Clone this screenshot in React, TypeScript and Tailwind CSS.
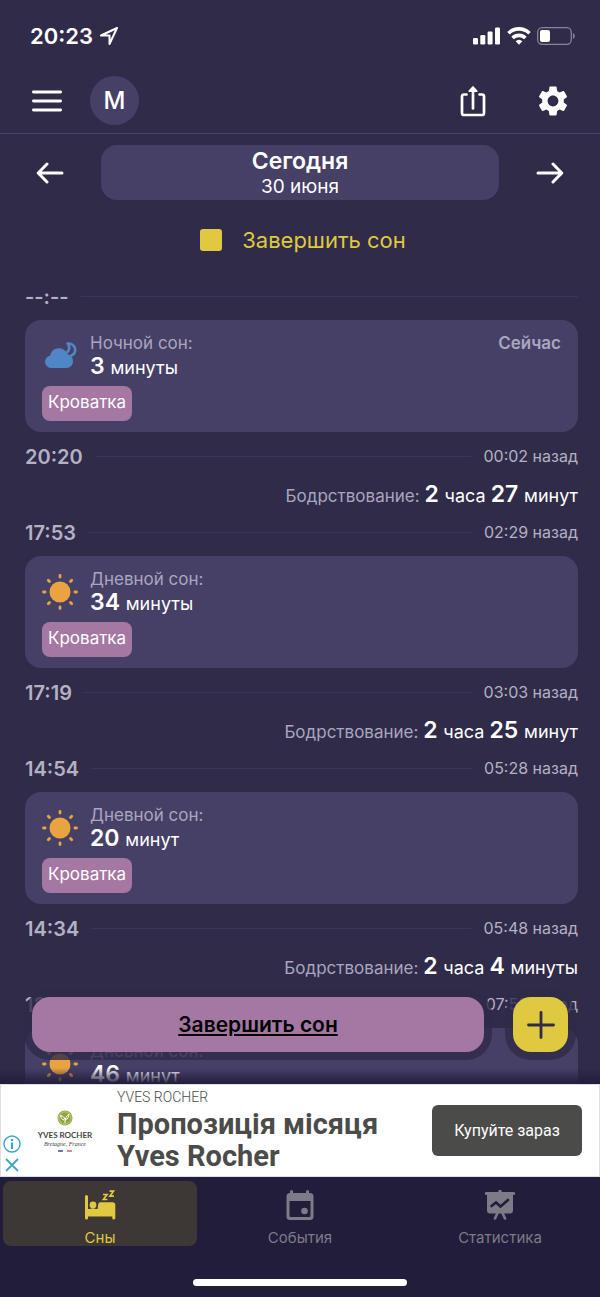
import type { ReactNode } from 'react'
import { MdSettings } from 'react-icons/md'

interface SleepEntry {
	id: string
	kind: 'night' | 'day'
	amount: string
	unit: string
	start: string
	startAgo: string
	end: string
	endAgo?: string
	now?: boolean
	awake?: [string, string, string, string]
}

const entries: SleepEntry[] = [
	{
		id: 'night',
		kind: 'night',
		amount: '3',
		unit: 'минуты',
		end: '--:--',
		start: '20:20',
		startAgo: '00:02 назад',
		now: true,
		awake: ['2', 'часа', '27', 'минут'],
	},
	{
		id: 'day-3',
		kind: 'day',
		amount: '34',
		unit: 'минуты',
		end: '17:53',
		endAgo: '02:29 назад',
		start: '17:19',
		startAgo: '03:03 назад',
		awake: ['2', 'часа', '25', 'минут'],
	},
	{
		id: 'day-2',
		kind: 'day',
		amount: '20',
		unit: 'минут',
		end: '14:54',
		endAgo: '05:28 назад',
		start: '14:34',
		startAgo: '05:48 назад',
		awake: ['2', 'часа', '4', 'минуты'],
	},
	{
		id: 'day-1',
		kind: 'day',
		amount: '46',
		unit: 'минут',
		end: '12:30',
		endAgo: '07:52 назад',
		start: '11:44',
		startAgo: '08:38 назад',
	},
]

function StatusBar() {
	return (
		<div className="flex h-18 items-center justify-between pr-[25px] pl-[30px] text-white">
			<div className="flex items-center gap-1.5">
				<span className="text-[22px] font-semibold">20:23</span>
				<svg className="h-5 w-5" viewBox="0 0 20 20" fill="none" stroke="currentColor" strokeWidth="2" strokeLinejoin="round">
					<path d="M18 2 2 9.5h8.5V18Z" />
				</svg>
			</div>
			<div className="flex items-center gap-1.5">
				<svg className="h-[18px] w-7" viewBox="0 0 28 18" fill="currentColor">
					<rect x="0" y="11" width="5" height="6.5" rx="1.2" />
					<rect x="7.3" y="8" width="5" height="9.5" rx="1.2" />
					<rect x="14.6" y="4.5" width="5" height="13" rx="1.2" />
					<rect x="22" y="0.5" width="5" height="17" rx="1.2" />
				</svg>
				<svg className="h-[18px] w-6" viewBox="0 0 24 18" fill="none" stroke="currentColor" strokeWidth="3.6">
					<path d="M1.500 6.200a15 15 0 0 1 21 0" />
					<path d="M5.600 11a9 9 0 0 1 12.800 0" />
					<path d="M12 17.800 8.600 14.300a4.600 4.600 0 0 1 6.800 0Z" fill="currentColor" stroke="none" />
				</svg>
				<svg className="h-[18px] w-[38px]" viewBox="0 0 38 18">
					<rect x="0.7" y="0.7" width="33.6" height="16.6" rx="4.5" fill="none" stroke="#8783a0" strokeWidth="1.3" />
					<rect x="3" y="3" width="10" height="12" rx="2" fill="#fff" />
					<path d="M36 6a3.4 3.4 0 0 1 0 6Z" fill="#8783a0" />
				</svg>
			</div>
		</div>
	)
}

function Header() {
	return (
		<header className="flex h-[62px] items-center border-b border-[#4a4567] px-8 pb-1 text-white">
			<button aria-label="Меню">
				<svg className="h-6 w-[30px]" viewBox="0 0 30 24" stroke="currentColor" strokeWidth="2.8" strokeLinecap="round">
					<path d="M1.4 3h27.2M1.4 12h27.2M1.4 21h27.2" />
				</svg>
			</button>
			<button className="ml-7 flex size-[49px] items-center justify-center rounded-full bg-[#464067] text-2xl font-medium">
				M
			</button>
			<button aria-label="Поделиться" className="mr-[49px] ml-auto">
				<svg className="h-8 w-[26px]" viewBox="0 0 26 32" fill="none" stroke="currentColor" strokeWidth="2.7" strokeLinecap="round" strokeLinejoin="round">
					<path d="M6.500 9.500H4a2 2 0 0 0-2 2v16.500a2 2 0 0 0 2 2h18a2 2 0 0 0 2-2V11.500a2 2 0 0 0-2-2h-2.500" />
					<path d="M13 23.500V5" />
					<path d="M9.300 6 13 2 16.700 6Z" fill="currentColor" strokeWidth="1.800" />
				</svg>
			</button>
			<button aria-label="Настройки">
				<MdSettings className="-mr-[3px] size-9" />
			</button>
		</header>
	)
}

function ArrowIcon({ flipped = false }: { flipped?: boolean }) {
	return (
		<svg
			className={flipped ? 'h-[22px] w-7 rotate-180' : 'h-[22px] w-7'}
			viewBox="0 0 28 22"
			fill="none"
			stroke="currentColor"
			strokeWidth="3"
			strokeLinecap="round"
			strokeLinejoin="round"
		>
			<path d="M26 11H2.500M11 2 2.200 11l8.800 9" />
		</svg>
	)
}

function DayPicker() {
	return (
		<div className="flex items-center gap-[37px] px-9 pt-[11px] text-white">
			<button aria-label="Предыдущий день">
				<ArrowIcon />
			</button>
			<button className="flex h-[55px] flex-1 flex-col items-center justify-center rounded-2xl bg-[#464067]">
				<span className="text-[23px] leading-7 font-semibold">Сегодня</span>
				<span className="text-[19px] leading-6">30 июня</span>
			</button>
			<button aria-label="Следующий день">
				<ArrowIcon flipped />
			</button>
		</div>
	)
}

function SunIcon() {
	return (
		<svg className="size-9" viewBox="0 0 36 36" fill="#e9a341" stroke="#e9a341" strokeWidth="2.8" strokeLinecap="round">
			<circle cx="18" cy="18" r="10.5" stroke="none" />
			<path d="M18 1.500v1.600M18 32.900v1.600M1.500 18h1.600M32.900 18h1.600M6.300 6.300l1.200 1.200M28.500 28.500l1.200 1.200M6.300 29.700l1.200-1.200M28.500 7.500l1.200-1.200" />
		</svg>
	)
}

function NightIcon() {
	return (
		<svg className="size-9" viewBox="0 0 36 36">
			<path
				d="M25.500 5.500c4.500-.4 8 2.700 7.700 6.700-.2 2.700-1.700 4.700-4.400 5.700M25.500 5.500c2.300 2.800 2.300 6.200-.6 9"
				fill="none"
				stroke="#4f86c6"
				strokeWidth="2.6"
				strokeLinecap="round"
				strokeLinejoin="round"
			/>
			<path d="M9 30a6.200 6.200 0 0 1-.9-12.300C8.800 13.200 12.400 10.200 16.800 10.200c4 0 7.200 2.300 8.500 6 3.300.6 5.700 3.200 5.700 6.900 0 4-2.700 6.900-6.500 6.900Z" fill="#4f86c6" />
		</svg>
	)
}

function TimeRow({ time, ago }: { time: string; ago?: string }) {
	return (
		<div className="flex h-12 items-center gap-3 text-[#b4b1c3]">
			<time className="pt-0.5 text-xl font-semibold">{time}</time>
			<span className="h-px flex-1 bg-[#3b3658]" />
			{ago && <span className="text-base">{ago}</span>}
		</div>
	)
}

// the trailing space belongs to the big figure, so it is as wide as the figure's own size
function Amount({ children }: { children: string }) {
	return <span className="text-[23px] font-semibold">{children} </span>
}

function SleepCard({ entry }: { entry: SleepEntry }) {
	return (
		<article className="h-28 rounded-2xl bg-[#464067] px-[17px] pt-3">
			<div className="flex gap-3">
				<div className="flex h-12 items-center">{entry.kind === 'night' ? <NightIcon /> : <SunIcon />}</div>
				<div className="flex-1">
					<div className="flex justify-between text-[17px] leading-[22px] text-[#aaa6bf]">
						<span>{entry.kind === 'night' ? 'Ночной сон:' : 'Дневной сон:'}</span>
						{entry.now && <span className="font-semibold">Сейчас</span>}
					</div>
					<div className="text-lg leading-6 text-white">
						<Amount>{entry.amount}</Amount>
						{entry.unit}
					</div>
				</div>
			</div>
			<button className="mt-1.5 flex h-[35px] items-center rounded-lg bg-[#a578a4] px-1.5 pb-0.5 text-[17px] text-white">
				Кроватка
			</button>
		</article>
	)
}

function Awake({ parts }: { parts: string[] }) {
	return (
		<div className="h-7 text-right text-lg leading-7 text-white">
			<span className="text-[17px] text-[#aaa6bf]">Бодрствование: </span>
			<Amount>{parts[0]}</Amount>
			{parts[1]} <Amount>{parts[2]}</Amount>
			{parts[3]}
		</div>
	)
}

function SleepList() {
	return (
		<div className="pr-[22px] pl-[25px]">
			{entries.map((entry) => (
				<section key={entry.id}>
					<TimeRow time={entry.end} ago={entry.endAgo} />
					<SleepCard entry={entry} />
					<TimeRow time={entry.start} ago={entry.startAgo} />
					{entry.awake && <Awake parts={entry.awake} />}
				</section>
			))}
		</div>
	)
}

function FloatingActions() {
	return (
		<div className="absolute inset-x-8 bottom-8 flex gap-[29px]">
			<button className="h-[55px] flex-1 rounded-[18px] bg-[#a578a4] text-[21px] font-semibold text-black underline ring-8 ring-[#2f2b48]/80">
				Завершить сон
			</button>
			<button
				aria-label="Добавить"
				className="flex size-[55px] items-center justify-center rounded-[18px] bg-[#dfc941] text-[#2f2b48] ring-8 ring-[#2f2b48]/80"
			>
				<svg className="size-7" viewBox="0 0 28 28" stroke="currentColor" strokeWidth="2.8" strokeLinecap="round">
					<path d="M14 1.500v25M1.500 14h25" />
				</svg>
			</button>
		</div>
	)
}

function AdBanner() {
	return (
		<aside className="relative flex h-[93px] shrink-0 items-center border border-[#dedee3] bg-white pr-[17px] pl-9 font-[Roboto,sans-serif]">
			<div className="absolute bottom-[3px] left-0.5 flex flex-col items-center gap-1 text-[#3ea6cc]">
				<svg className="size-[18px]" viewBox="0 0 18 18" fill="none" stroke="currentColor" strokeWidth="1.5">
					<circle cx="9" cy="9" r="8" />
					<path d="M9 7.500V14M9 4v2" strokeWidth="2.2" />
				</svg>
				<svg className="size-4" viewBox="0 0 16 16" stroke="currentColor" strokeWidth="1.8">
					<path d="m2 2 12 12M14 2 2 14" />
				</svg>
			</div>
			<div className="flex w-14 flex-col items-center">
				<svg className="size-4" viewBox="0 0 16 16" fill="none">
					<circle cx="8" cy="8" r="7.5" fill="#8fa63c" />
					<circle cx="8" cy="8" r="6.2" stroke="#dfe6bd" strokeWidth=".6" />
					<path d="M8 13c0-4 1-7 4-9-.2 3-1 5-4 6M7.500 10C5 9.800 4 8 3.500 5.500c2.500.5 4 1.700 4.300 4" stroke="#fff" strokeWidth="1" />
				</svg>
				<span className="mt-1 font-[Lato,sans-serif] text-[8px] leading-[10px] font-bold whitespace-nowrap text-[#444]">
					YVES ROCHER
				</span>
				<span className="font-['Liberation_Serif',serif] text-[6px] leading-[8px] text-[#444] italic">Bretagne, France</span>
				<span className="mt-0.5 flex gap-1">
					<span className="h-0.5 w-[5px] bg-[#6a76bd]" />
					<span className="h-0.5 w-[5px] bg-[#e58286]" />
				</span>
			</div>
			<div className="ml-6 flex-1 text-[#4b4b4a]">
				<div className="mb-[3px] text-sm leading-4 font-light">YVES ROCHER</div>
				<div className="text-[29px] leading-8 font-bold">Пропозиція місяця Yves Rocher</div>
			</div>
			<button className="h-[51px] w-[150px] rounded-md bg-[#4b4b49] text-base text-white">Купуйте зараз</button>
		</aside>
	)
}

function Tab({ label, active = false, children }: { label: string; active?: boolean; children: ReactNode }) {
	return (
		<a
			href="#"
			aria-current={active ? 'page' : undefined}
			className={`flex h-[65px] flex-1 flex-col items-center justify-between rounded-lg pt-[9px] ${
				active ? 'bg-[#3d3735] text-[#dfc941]' : 'text-[#7d7b88]'
			}`}
		>
			{children}
			<span className="text-[15px] leading-4">{label}</span>
		</a>
	)
}

function BottomNav() {
	return (
		<nav className="flex h-[120px] shrink-0 flex-col justify-between bg-[#211d3b] px-[3px] pt-1 pb-[11px]">
			<div className="flex gap-1.5">
				<Tab label="Сны" active>
					<svg className="h-[30px] w-8" viewBox="0 0 32 30" fill="currentColor">
						<path d="M1 6.500a1.500 1.500 0 0 1 3 0V19h9.500l.8-5a2 2 0 0 1 2-1.700H28.500a2.800 2.800 0 0 1 2.800 2.800V28a1.500 1.500 0 0 1-3 0V26.500H4V28a1.500 1.500 0 0 1-3 0Z" />
						<circle cx="9" cy="15" r="3.4" />
						<path d="M5 19.500c1-1.500 6-1.500 8 0Z" />
						<path d="M19 4.500h4l-3.600 5h4M25.500 1.200h4l-3.600 5h4" fill="none" stroke="currentColor" strokeWidth="1.700" />
					</svg>
				</Tab>
				<Tab label="События">
					<svg className="h-[30px] w-8" viewBox="0 0 32 30" fill="currentColor" fillRule="evenodd">
						<path d="M7.500 0a1.500 1.500 0 0 1 1.500 1.500V3h13V1.500a1.500 1.500 0 0 1 3 0V3h1a3.500 3.500 0 0 1 3.500 3.500v20A3.500 3.500 0 0 1 26 30H6a3.500 3.500 0 0 1-3.500-3.500v-20A3.500 3.500 0 0 1 6 3V1.500A1.500 1.500 0 0 1 7.500 0ZM5.500 11v15a1 1 0 0 0 1 1h19a1 1 0 0 0 1-1V11Z" />
						<circle cx="20.5" cy="21" r="3.3" />
					</svg>
				</Tab>
				<Tab label="Статистика">
					<svg className="h-[30px] w-8" viewBox="0 0 32 30" fill="currentColor">
						<path d="M1 3.500A1.300 1.300 0 0 1 2.300 2h12V1.500a1.700 1.700 0 0 1 3.400 0V2h12a1.500 1.500 0 0 1 0 3H29v15.500a3 3 0 0 1-3 3H6a3 3 0 0 1-3-3V5h-.7A1.300 1.300 0 0 1 1 3.500Z" />
						<path d="M13.500 23 11 28.500M18.500 23l2.500 5.500" stroke="currentColor" strokeWidth="2.6" strokeLinecap="round" />
						<path d="m7.500 16 4.500-3.500 4.500 4 7.500-6.500" fill="none" stroke="#211d3b" strokeWidth="2.6" strokeLinecap="round" />
					</svg>
				</Tab>
			</div>
			<div className="h-[7px] w-[214px] self-center rounded-full bg-white" />
		</nav>
	)
}

export default function App() {
	return (
		<div className="flex h-screen flex-col bg-[#2f2b48] font-[Inter,sans-serif]">
			<StatusBar />
			<Header />
			<main className="relative min-h-0 flex-1 overflow-hidden">
				<DayPicker />
				<button className="flex h-18 w-full items-center justify-center gap-5 pt-2 pl-1.5 text-[#dfc941]">
					<span className="size-[22px] rounded-[3px] bg-[#dfc941]" />
					<span className="text-[22px]">Завершить сон</span>
				</button>
				<SleepList />
				<div className="absolute inset-x-0 bottom-0 h-4 bg-linear-to-b from-transparent to-[#211d3b]" />
				<FloatingActions />
			</main>
			<AdBanner />
			<BottomNav />
		</div>
	)
}
